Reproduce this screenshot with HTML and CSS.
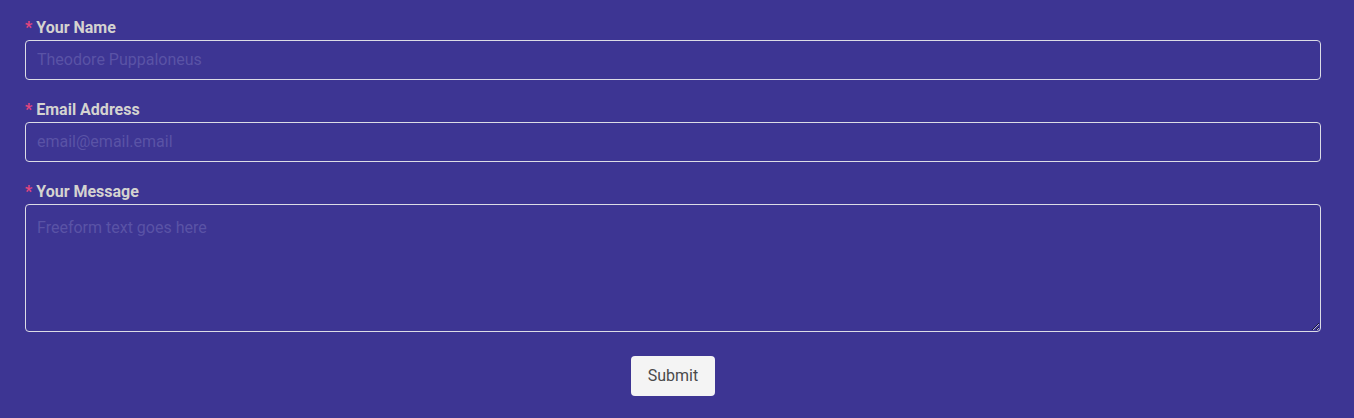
FILE: index.html
```html
<!DOCTYPE html>
<html lang="en">
<head>
<meta charset="utf-8">
<title>Contact form</title>
<link rel="stylesheet" href="styles.css">
</head>
<body>
<form class="form">
  <div class="field">
    <label class="label" for="name"><span class="req">*</span> Your Name</label>
    <input class="input" id="name" type="text" placeholder="Theodore Puppaloneus">
  </div>
  <div class="field">
    <label class="label" for="email"><span class="req">*</span> Email Address</label>
    <input class="input" id="email" type="email" placeholder="email@email.email">
  </div>
  <div class="field field-last">
    <label class="label" for="msg"><span class="req">*</span> Your Message</label>
    <textarea class="input textarea" id="msg" placeholder="Freeform text goes here"></textarea>
  </div>
  <div class="actions">
    <button class="submit" type="button">Submit</button>
  </div>
</form>
</body>
</html>
```

FILE: styles.css
```css
html, body {
  margin: 0;
  padding: 0;
  background: #3d3593;
  font-family: Roboto, "Liberation Sans", sans-serif;
}

.form {
  padding: 16px 33px 22px 25px;
  display: flex;
  flex-direction: column;
}

.field {
  display: flex;
  flex-direction: column;
  margin-bottom: 18px;
}

.field-last {
  margin-bottom: 24px;
}

.label {
  font-size: 16px;
  font-weight: 700;
  line-height: 24px;
  color: #d4d3d0;
}

.req {
  color: #e4457e;
}

.input {
  box-sizing: border-box;
  width: 100%;
  height: 40px;
  margin: 0;
  padding: 0 11px 2px;
  border: 1px solid #dcdce6;
  border-radius: 4px;
  background: transparent;
  font-family: Roboto, "Liberation Sans", sans-serif;
  font-size: 16px;
  color: #e0e0e0;
  outline: none;
}

.input::placeholder {
  color: #5a53a6;
  opacity: 1;
}

.textarea {
  height: 128px;
  padding: 12px 11px;
  line-height: 22px;
  resize: vertical;
  display: block;
}

.actions {
  display: flex;
  justify-content: center;
}

.submit {
  height: 40px;
  padding: 0 17px 2px;
  border: none;
  border-radius: 4px;
  background: #f4f4f4;
  color: #4a4a4a;
  font-family: Roboto, "Liberation Sans", sans-serif;
  font-size: 16px;
}
```
